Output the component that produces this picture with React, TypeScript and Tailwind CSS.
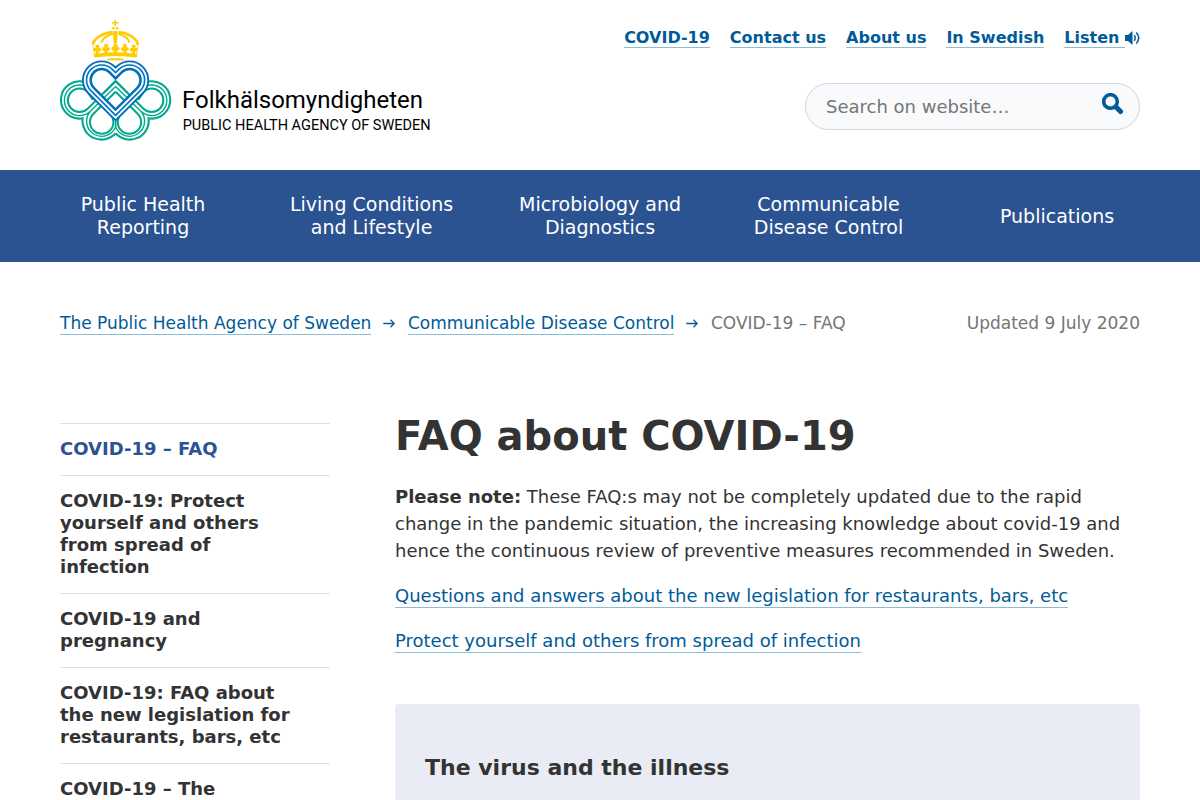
import React from "react";

const LINK = "border-b border-[#8bbdd9] text-[#005b99]";

const heart = (r: number) => {
  const k = 0.7071 * r;
  return `M115.6 ${94 + 2 * k}L${101.6 - k} ${80 + k}A${r} ${r} 0 0 1 ${101.6 + k} ${80 - k}L115.6 ${94 - 2 * k}L${129.6 - k} ${80 - k}A${r} ${r} 0 0 1 ${129.6 + k} ${80 + k}Z`;
};

const HalfClover = () => (
  <g stroke="#00a88e">
    <path strokeWidth="2.1" d="M86 82.500A18.600 18.600 0 1 0 82.600 118.300A19 19 0 0 0 115.600 133.300" />
    <path strokeWidth="1.4" d="M90 89A15.300 15.300 0 1 0 90.300 111.300L115.600 86.400M90.300 111.300A15.100 15.100 0 1 0 115.600 127.100V121" />
    <path strokeWidth="2" d="M93 100L87.700 91.900A11.700 11.700 0 1 0 87.700 108.700L115.600 81M115.600 91.700L93.300 114A11.700 11.700 0 1 0 109.800 113.700L104 107.900" />
  </g>
);

const Club = ({ x, y, s }: { x: number; y: number; s: number }) => (
  <g transform={`translate(${x} ${y}) scale(${s})`}>
    <circle cy="-2.600" r="2" />
    <circle cx="-2" cy=".6" r="2" />
    <circle cx="2" cy=".6" r="2" />
    <path d="M-.9 -1h1.800l.9 6h-3.600z" />
  </g>
);

const Logo = () => (
  <svg width="375" height="128" viewBox="60 18 375 128" fill="none" className="shrink-0">
    <HalfClover />
    <g transform="translate(231.200 0) scale(-1 1)">
      <HalfClover />
    </g>
    <path d={heart(14.8)} stroke="#fff" strokeWidth="8.5" />
    <path d="M103 93.600L115.600 81L128.200 93.600" stroke="#00a88e" strokeWidth="1.9" />
    <g stroke="#0071bc">
      <path d={heart(18.7)} strokeWidth="1.9" />
      <path d={heart(15.1)} strokeWidth="1.6" />
      <path d={heart(11)} strokeWidth="2.5" />
    </g>
    <g fill="#fc0">
      <path d="M114.600 20h1.500v2.100h2.500v1.500h-2.500v2.400h-1.500v-2.400h-2.500v-1.500h2.500z" />
      <circle cx="113.500" cy="28.200" r="1.300" />
      <circle cx="117.200" cy="28.200" r="1.300" />
      <path d="M113 31h4.500l-.4 12h-3.600z" />
      <path d="M93.600 54q21.800-3.300 43.800 0l-.8 3.500q-21-3-42.200 0z" />
      <path d="M107.600 58.500q8-.7 16 0v2.100q-8-.7-16 0z" />
      <Club x={97.300} y={49} s={0.98} />
      <Club x={106} y={48.300} s={1} />
      <Club x={115.400} y={48} s={1.05} />
      <Club x={124.900} y={48.300} s={1} />
      <Club x={133.700} y={49} s={0.98} />
    </g>
    <g stroke="#fc0">
      <path strokeWidth="2.600" d="M92.800 45C93.500 38 104 32.500 112.500 32M138 45C137.300 38 126.800 32.500 118.500 32" />
      <path strokeWidth="2" d="M101.500 42.500C102.500 38 108.500 35 113 33.500M129.500 42.500C128.500 38 122.500 35 118 33.500" />
      <path strokeWidth=".8" d="M93 45.500l1.500 9M137.800 45.500l-1.500 9" />
    </g>
    <g fill="#000" className="font-[Roboto,sans-serif]">
      <text x="182" y="107.500" fontSize="24.500" textLength="241" lengthAdjust="spacingAndGlyphs">Folkhälsomyndigheten</text>
      <text x="182.700" y="129.700" fontSize="14" textLength="248" lengthAdjust="spacingAndGlyphs">PUBLIC HEALTH AGENCY OF SWEDEN</text>
    </g>
  </svg>
);

const NAV = [
  ["Public Health", "Reporting"],
  ["Living Conditions", "and Lifestyle"],
  ["Microbiology and", "Diagnostics"],
  ["Communicable", "Disease Control"],
  ["Publications"],
];

const SIDE = [
  "COVID-19: Protect yourself and others from spread of infection",
  "COVID-19 and pregnancy",
  "COVID-19: FAQ about the new legislation for restaurants, bars, etc",
  "COVID-19 – The",
];

const Arrow = () => (
  <svg width="12" height="10" viewBox="0 0 12 10" fill="none" stroke="#005b99" strokeWidth="1.3" className="ml-[12px] mr-[12.500px]">
    <path d="M.3 4.500h11M7.500 .8l3.700 3.700-3.700 3.700" />
  </svg>
);

export default function App() {
  return (
    <div className="h-[800px] w-[1200px] overflow-hidden bg-white font-['DejaVu_Sans',sans-serif] text-[18px] text-[#333]">
      <header className="flex h-[170px] justify-between px-[60px] pt-[18px]">
        <Logo />
        <div className="flex flex-col items-end">
          <nav className="mt-[10px] flex gap-5 text-[16px] font-bold leading-[19px]">
            {["COVID-19", "Contact us", "About us", "In Swedish"].map((t) => (
              <a key={t} className={LINK}>{t}</a>
            ))}
            <a className="flex items-center text-[#005b99]">
              <span className="whitespace-pre border-b border-[#8bbdd9]">Listen </span>
              <svg width="15" height="14" viewBox="0 0 15 14" fill="none" stroke="#005b99" strokeWidth="1.5">
                <path d="M0 4h3l4.500-4v14l-4.500-4H0z" fill="#005b99" stroke="none" />
                <path d="M9.300 4.200q1.800 2.800 0 5.600M11.300 1.500q4.800 5.500 0 11" />
              </svg>
            </a>
          </nav>
          <div className="mt-[35px] flex h-[47px] w-[335px] items-center justify-between rounded-full border border-[#d2d4e0] bg-[#f9fafc] pl-5 pr-[15px]">
            <span className="text-[18px] text-[#757575]">Search on website…</span>
            <svg width="22" height="22" viewBox="0 0 22 22" fill="none" stroke="#005b99" className="-mt-[6px]">
              <circle cx="8.500" cy="8.500" r="6.800" strokeWidth="3.6" />
              <path d="M14.500 14.500l4 4" strokeWidth="5" strokeLinecap="round" />
            </svg>
          </div>
        </div>
      </header>
      <nav className="flex h-[92px] items-center bg-[#2b5392] pl-[28.800px] text-center text-[19px] leading-[23px] text-white">
        {NAV.map((n) => (
          <a key={n[0]} className="w-[228.500px] shrink-0">
            {n.map((l) => <div key={l}>{l}</div>)}
          </a>
        ))}
      </nav>
      <div className="mt-[50px] flex h-[23px] items-center px-[60px] text-[17px] leading-[22px]">
        <a className={LINK}>The Public Health Agency of Sweden</a>
        <Arrow />
        <a className={LINK}>Communicable Disease Control</a>
        <Arrow />
        <span className="pb-px text-[#757575]">COVID-19 – FAQ</span>
        <span className="ml-auto pb-px text-[#757575]">Updated 9 July 2020</span>
      </div>
      <div className="mt-[72px] flex px-[60px]">
        <aside className="mt-[16px] w-[270px] shrink-0 font-bold leading-[22px]">
          <div className="border-t border-[#dddfe7] pb-[15px] pt-[14px] text-[#2b5392]">COVID-19 – FAQ</div>
          {SIDE.map((s) => (
            <div key={s} className="border-t border-[#dddfe7] pb-[15px] pr-[30px] pt-[14px]">{s}</div>
          ))}
        </aside>
        <main className="ml-[65px] w-[745px]">
          <h1 className="mt-px text-[40px] font-bold leading-[56px]">FAQ about COVID-19</h1>
          <p className="mt-[19px] leading-[27px]">
            <b>Please note:</b> These FAQ:s may not be completely updated due to the rapid change in the pandemic
            situation, the increasing knowledge about covid-19 and hence the continuous review of preventive measures
            recommended in Sweden.
          </p>
          <p className="mt-[18px] leading-[27px]"><a className={`${LINK} pb-px`}>Questions and answers about the new legislation for restaurants, bars, etc</a></p>
          <p className="mt-[18px] leading-[27px]"><a className={`${LINK} pb-px`}>Protect yourself and others from spread of infection</a></p>
          <section className="mt-[50px] h-[200px] rounded bg-[#e9ecf4] px-[30px] pt-[49px]">
            <h2 className="text-[22px] font-bold leading-[30px]">The virus and the illness</h2>
          </section>
        </main>
      </div>
    </div>
  );
}
